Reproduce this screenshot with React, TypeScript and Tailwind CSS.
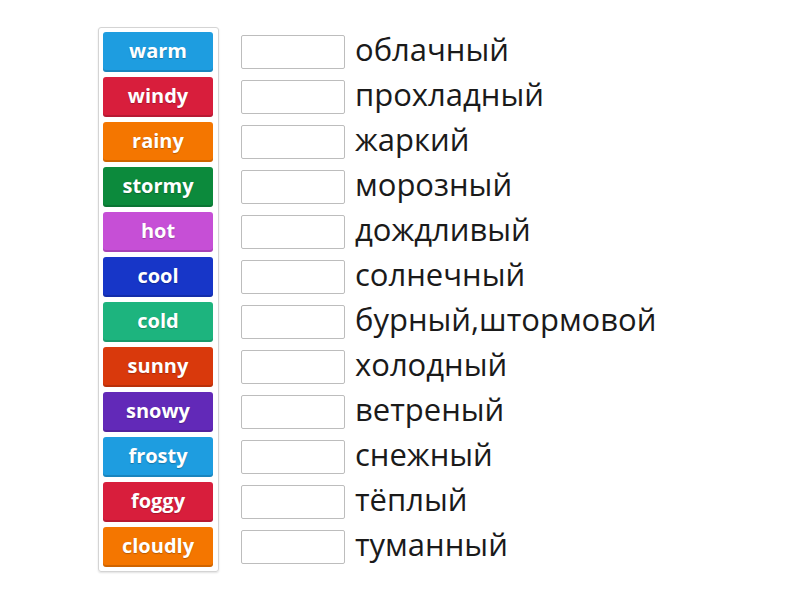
import React from 'react';

const tiles = [
  { word: 'warm', color: 'bg-[#1e9de0]' },
  { word: 'windy', color: 'bg-[#d81e3c]' },
  { word: 'rainy', color: 'bg-[#f47600]' },
  { word: 'stormy', color: 'bg-[#0c8a3c]' },
  { word: 'hot', color: 'bg-[#c64fd6]' },
  { word: 'cool', color: 'bg-[#1736c8]' },
  { word: 'cold', color: 'bg-[#1db47e]' },
  { word: 'sunny', color: 'bg-[#d9390c]' },
  { word: 'snowy', color: 'bg-[#6229b8]' },
  { word: 'frosty', color: 'bg-[#1e9de0]' },
  { word: 'foggy', color: 'bg-[#d81e3c]' },
  { word: 'cloudly', color: 'bg-[#f47600]' },
];

const answers = [
  'облачный',
  'прохладный',
  'жаркий',
  'морозный',
  'дождливый',
  'солнечный',
  'бурный,штормовой',
  'холодный',
  'ветреный',
  'снежный',
  'тёплый',
  'туманный',
];

export default function App() {
  return (
    <div className="w-[800px] h-[600px] bg-white font-['Open_Sans',sans-serif]">
      <div className="flex pl-[98px] pt-[27px] gap-[22px]">
        <div className="flex flex-col gap-[5px] w-[121px] p-[4px] border border-[#d4d4d4] rounded-[3px] shadow-[0_1px_2px_rgba(0,0,0,0.12)]">
          {tiles.map((t) => (
            <div
              key={t.word}
              className={`${t.color} h-[40px] w-[110px] rounded-[3px] flex items-center justify-center text-white font-bold text-[20px] pb-[2px] shadow-[inset_0_-2px_0_rgba(0,0,0,0.15)] [text-shadow:0_1px_1px_rgba(0,0,0,0.25)]`}
            >
              {t.word}
            </div>
          ))}
        </div>
        <div className="flex flex-col gap-[5px] pt-[5px]">
          {answers.map((a) => (
            <div key={a} className="h-[40px] flex items-center gap-[10px]">
              <div className="w-[104px] h-[34px] border border-[#bdbdbd] rounded-[2px] bg-white" />
              <span className="text-[31px] text-[#1a1a1a] leading-none pb-[6px]">{a}</span>
            </div>
          ))}
        </div>
      </div>
    </div>
  );
}
